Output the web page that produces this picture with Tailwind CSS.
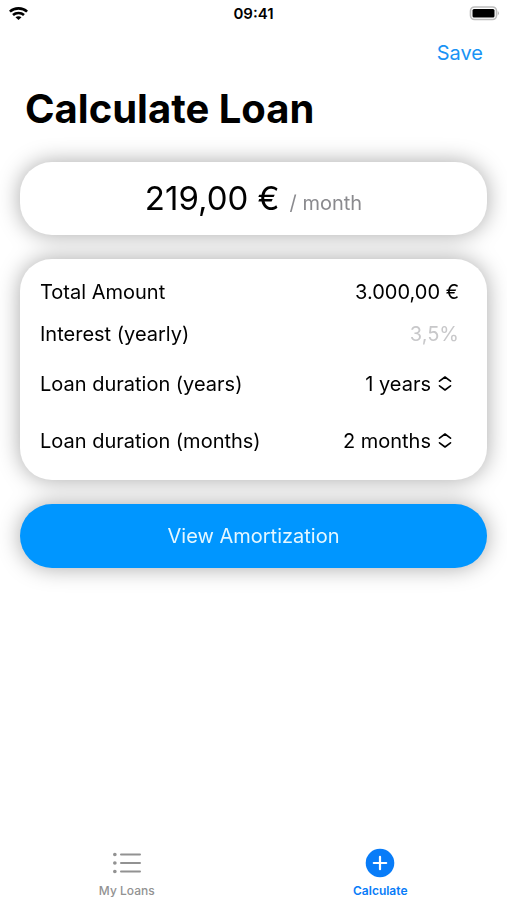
<!DOCTYPE html>
<html lang="en">
<head>
<meta charset="utf-8">
<meta name="viewport" content="width=device-width, initial-scale=1">
<title>Calculate Loan</title>
<script src="https://cdn.jsdelivr.net/npm/@tailwindcss/browser@4"></script>
</head>
<body class="flex min-h-screen flex-col bg-white font-['Inter','Liberation_Sans',sans-serif] text-xl text-black">
  <div class="grid h-7 grid-cols-3 items-center px-2">
    <svg class="h-4 w-5" viewBox="0 0 20 16" fill="none" stroke="black" stroke-width="2.6" role="img" aria-label="Wi-Fi">
      <path d="M1.9 5.6C6.4 1.3 14.6 1.3 19.1 5.6"/>
      <path d="M5 9C8 6.3 13 6.3 16 9"/>
      <path d="M10.5 14L7.5 11.2C9.1 9.8 11.9 9.8 13.5 11.2Z" fill="black" stroke="none"/>
    </svg>
    <time class="text-center text-[15px] leading-5 font-semibold">09:41</time>
    <svg class="h-4 w-8 justify-self-end" viewBox="0 0 32 16" role="img" aria-label="Battery full">
      <rect x="3.5" y="1" width="26" height="12.5" rx="4" fill="none" stroke="#bdbdbd" stroke-width="1.6"/>
      <rect x="5.5" y="3" width="22" height="8.5" rx="1.5" fill="black"/>
      <path d="M30.8 5Q33 7.2 30.8 9.4Z" fill="#b5b5b5"/>
    </svg>
  </div>
  <header>
    <div class="flex h-[50px] items-center justify-end px-6">
      <button type="button" class="text-[#1993f5]">Save</button>
    </div>
    <h1 class="px-[25px] pt-[7px] text-[40px] leading-12 font-bold">Calculate Loan</h1>
  </header>
  <main class="grow px-5 pt-[29px]">
    <form class="flex flex-col gap-6 drop-shadow-[0_0_11px_rgba(0,0,0,0.34)]">
      <output class="flex h-[73px] items-center justify-center rounded-[32px] bg-white">
        <span class="flex items-baseline gap-[10px]"><span class="text-[33px]">219,00 €</span><span class="text-[#8a8a8e]">/ month</span></span>
      </output>
      <div class="rounded-[32px] bg-white px-5 pt-3 pb-[11px]">
        <div class="flex h-[42px] items-center justify-between">
          <label for="amount">Total Amount</label>
          <input id="amount" type="text" value="3.000,00 €" class="w-40 pr-2 text-right outline-none">
        </div>
        <div class="flex h-[42px] items-center justify-between">
          <label for="interest">Interest (yearly)</label>
          <input id="interest" type="text" placeholder="3,5%" class="w-40 pr-2 text-right outline-none placeholder:text-[#c8c8ca]">
        </div>
        <div class="flex h-[57px] items-center justify-between">
          <label for="years">Loan duration (years)</label>
          <div class="flex items-center gap-[6px] pr-[14px]">
            <select id="years" class="w-28 appearance-none text-right outline-none [text-align-last:right]"><option>1 years</option></select>
            <svg class="h-4 w-4" viewBox="0 0 16 16" fill="none" stroke="black" stroke-width="1.6" stroke-linecap="round" stroke-linejoin="round" aria-hidden="true"><path d="M2.5 5.2L8 1L13.5 5.2M2.5 9.8L8 14L13.5 9.8"/></svg>
          </div>
        </div>
        <div class="flex h-[57px] items-center justify-between">
          <label for="months">Loan duration (months)</label>
          <div class="flex items-center gap-[6px] pr-[14px]">
            <select id="months" class="w-28 appearance-none text-right outline-none [text-align-last:right]"><option>2 months</option></select>
            <svg class="h-4 w-4" viewBox="0 0 16 16" fill="none" stroke="black" stroke-width="1.6" stroke-linecap="round" stroke-linejoin="round" aria-hidden="true"><path d="M2.5 5.2L8 1L13.5 5.2M2.5 9.8L8 14L13.5 9.8"/></svg>
          </div>
        </div>
      </div>
      <button type="button" class="h-16 rounded-[32px] bg-[#0096ff] text-[#e4f7ff]">View Amortization</button>
    </form>
  </main>
  <nav class="grid grid-cols-2 pb-px text-xs">
    <a href="#loans" class="flex flex-col items-center gap-1 font-medium text-[#929292]">
      <svg class="h-8 w-8" viewBox="0 0 32 32" fill="none" stroke="currentColor" stroke-width="2" stroke-linecap="round" aria-hidden="true">
        <path d="M10 7.5H29M10 16H29M10 24.5H29"/>
        <path d="M3.8 7.5H3.9M3.8 16H3.9M3.8 24.5H3.9" stroke-width="3.6"/>
      </svg>
      <span class="leading-4">My Loans</span>
    </a>
    <a href="#calculate" class="flex flex-col items-center gap-1 font-semibold text-[#087cf8]">
      <svg class="h-8 w-8" viewBox="0 0 32 32" aria-hidden="true">
        <circle cx="16" cy="16" r="14.3" fill="currentColor"/>
        <path d="M16 9.8V22.2M9.8 16H22.2" stroke="white" stroke-width="2.2" stroke-linecap="round"/>
      </svg>
      <span class="leading-4">Calculate</span>
    </a>
  </nav>
</body>
</html>
